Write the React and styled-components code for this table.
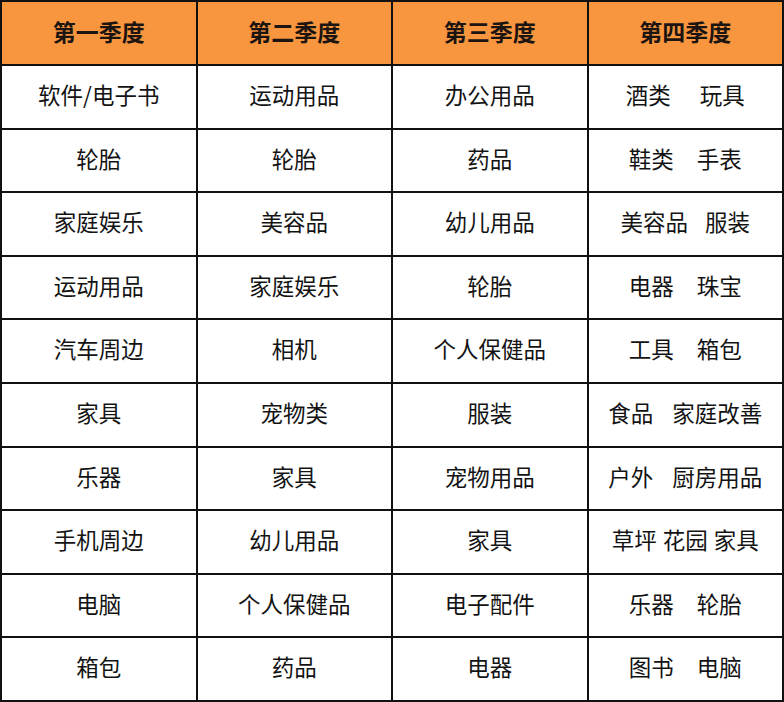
import React from 'react'
import styled, { createGlobalStyle } from 'styled-components'

const GlobalStyle = createGlobalStyle`
  html, body {
    margin: 0;
    padding: 0;
    background: #fff;
  }
  body {
    font-family: "Noto Sans CJK SC", "Noto Sans", sans-serif;
  }
`

const Table = styled.table`
  width: 784px;
  height: 702px;
  border-collapse: collapse;
  table-layout: fixed;
`

const HeadRow = styled.tr`
  height: 64px;
  background: #f8963f;
`

const Row = styled.tr`
  height: 63.5px;
  background: #fff;
`

const HeadCell = styled.th`
  border: 2px solid #111;
  color: #1c1410;
  font-size: 23px;
  font-weight: 700;
  line-height: 1;
  text-align: center;
  vertical-align: middle;
  padding: 0 0 4px;
`

const Cell = styled.td`
  border: 2px solid #111;
  color: #131313;
  font-size: 22.5px;
  font-weight: 400;
  line-height: 1;
  text-align: center;
  vertical-align: middle;
  padding: 0 0 5px;
`

const Words = styled.span`
  display: inline-flex;
  justify-content: center;
  gap: ${props => props.gap}px;
`

const headers = ['第一季度', '第二季度', '第三季度', '第四季度']

// 第四列的词之间留的空白宽窄不一
const rows = [
  ['软件/电子书', '运动用品', '办公用品', { words: ['酒类', '玩具'], gap: 29 }],
  ['轮胎', '轮胎', '药品', { words: ['鞋类', '手表'], gap: 23 }],
  ['家庭娱乐', '美容品', '幼儿用品', { words: ['美容品', '服装'], gap: 17 }],
  ['运动用品', '家庭娱乐', '轮胎', { words: ['电器', '珠宝'], gap: 23 }],
  ['汽车周边', '相机', '个人保健品', { words: ['工具', '箱包'], gap: 23 }],
  ['家具', '宠物类', '服装', { words: ['食品', '家庭改善'], gap: 19 }],
  ['乐器', '家具', '宠物用品', { words: ['户外', '厨房用品'], gap: 19 }],
  ['手机周边', '幼儿用品', '家具', { words: ['草坪', '花园', '家具'], gap: 6 }],
  ['电脑', '个人保健品', '电子配件', { words: ['乐器', '轮胎'], gap: 23 }],
  ['箱包', '药品', '电器', { words: ['图书', '电脑'], gap: 23 }],
]

function Content({ value }) {
  if (typeof value === 'string') return value
  return (
    <Words gap={value.gap}>
      {value.words.map(w => (
        <span key={w}>{w}</span>
      ))}
    </Words>
  )
}

export default function App() {
  return (
    <>
      <GlobalStyle />
      <Table>
        <thead>
          <HeadRow>
            {headers.map(h => (
              <HeadCell key={h}>{h}</HeadCell>
            ))}
          </HeadRow>
        </thead>
        <tbody>
          {rows.map((row, i) => (
            <Row key={i}>
              {row.map((value, j) => (
                <Cell key={j}>
                  <Content value={value} />
                </Cell>
              ))}
            </Row>
          ))}
        </tbody>
      </Table>
    </>
  )
}
